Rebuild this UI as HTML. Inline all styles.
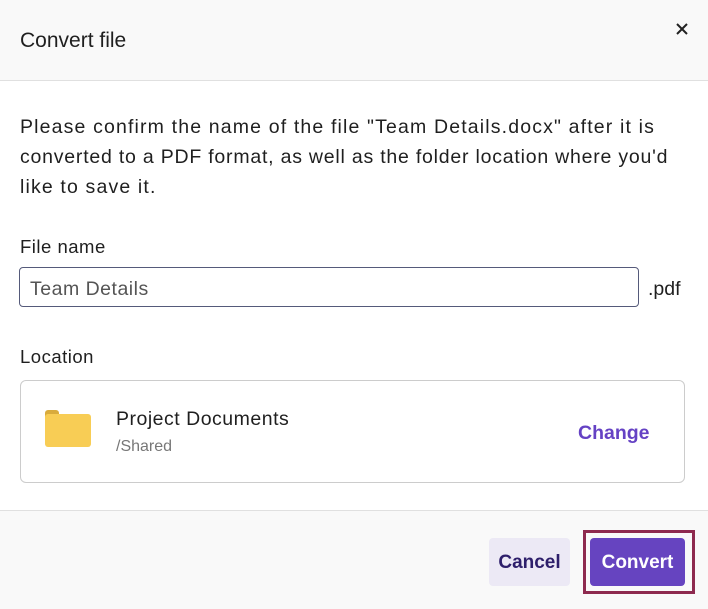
<!DOCTYPE html><html><head><style>
body{margin:0;width:708px;height:608px;background:#fff;font-family:"Liberation Sans",sans-serif;color:#1f1f1f;position:relative;overflow:hidden}
.a{position:absolute}
</style></head><body>
<div class="a" style="left:0;top:0;width:708px;height:80px;background:#f9f9f9;border-bottom:1px solid #e0e0e0"></div>
<div class="a" style="left:20px;top:29px;font-size:21px">Convert file</div>
<svg class="a" style="left:675px;top:22px" width="14" height="14"><path d="M2 2L12 12M12 2L2 12" stroke="#222" stroke-width="2"/></svg>
<div class="a" style="left:20px;top:112px;width:700px;font-size:19.5px;line-height:30px;white-space:nowrap;letter-spacing:1.15px">Please confirm the name of the file "Team Details.docx" after it is<br><span style="letter-spacing:0.78px">converted to a PDF format, as well as the folder location where you'd</span><br>like to save it.</div>
<div class="a" style="left:20px;top:236px;font-size:18.5px;letter-spacing:0.5px">File name</div>
<div class="a" style="left:19px;top:267px;width:618px;height:38px;border:1px solid #555a7a;border-radius:4px"></div>
<div class="a" style="left:30px;top:278px;font-size:19.5px;color:#555;letter-spacing:0.5px">Team Details</div>
<div class="a" style="left:648px;top:278px;font-size:19.5px">.pdf</div>
<div class="a" style="left:20px;top:346px;font-size:18.5px;letter-spacing:0.5px">Location</div>
<div class="a" style="left:20px;top:380px;width:663px;height:101px;border:1px solid #ccc;border-radius:6px"></div>
<div class="a" style="left:45px;top:410px;width:14px;height:8px;background:#d9ab3c;border-radius:3px 3px 0 0"></div>
<div class="a" style="left:45px;top:414px;width:46px;height:33px;background:#f8cd55;border-radius:3px"></div>
<div class="a" style="left:116px;top:408px;font-size:19.5px;letter-spacing:0.5px">Project Documents</div>
<div class="a" style="left:116px;top:438px;font-size:16px;color:#777">/Shared</div>
<div class="a" style="left:578px;top:422px;font-size:19.5px;font-weight:bold;color:#6542c4">Change</div>
<div class="a" style="left:0;top:510px;width:708px;height:98px;background:#f9f9f9;border-top:1px solid #e0e0e0"></div>
<div class="a" style="left:489px;top:538px;width:81px;height:48px;background:#ece9f5;border-radius:4px;color:#2e1f6b;font-weight:bold;font-size:19px;line-height:50px;text-align:center">Cancel</div>
<div class="a" style="left:583px;top:530px;width:106px;height:58px;border:3px solid #8e2a4f"></div>
<div class="a" style="left:590px;top:538px;width:95px;height:48px;background:#6644c0;border-radius:4px;color:#fff;font-weight:bold;font-size:19px;line-height:50px;text-align:center">Convert</div>
</body></html>
